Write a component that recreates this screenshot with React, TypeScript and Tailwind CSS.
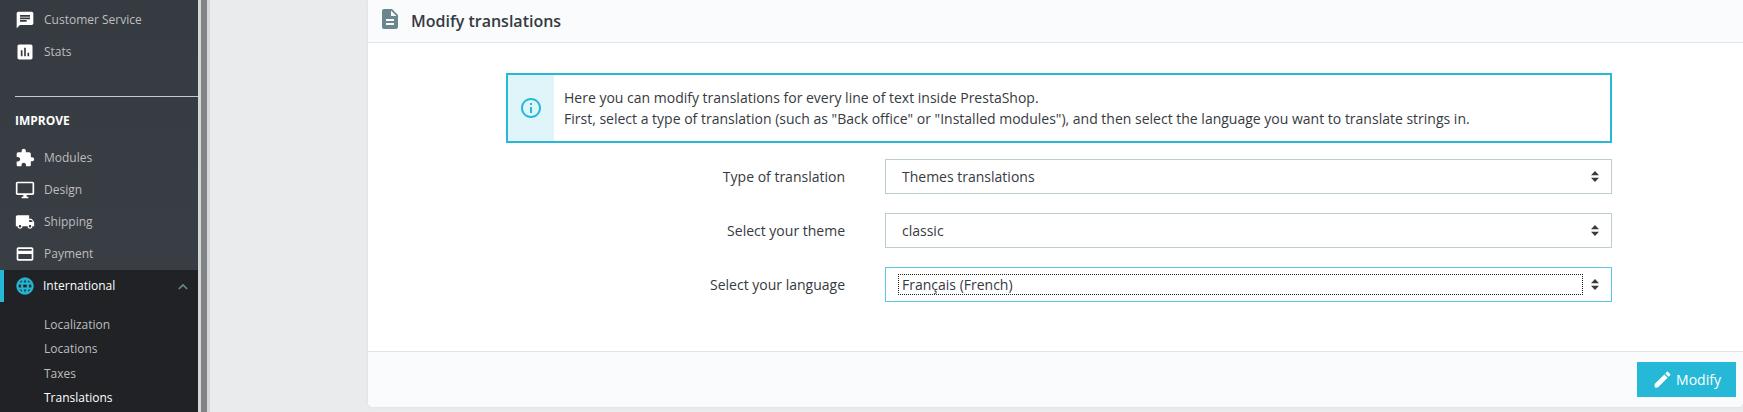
import React from "react";

const Mi = ({ d, className = "" }: { d: string; className?: string }) => (
  <svg viewBox="0 0 24 24" className={"shrink-0 " + className} fill="currentColor"><path d={d} /></svg>
);

const icons = {
  chat: "M20 2H4c-1.100 0-2 .9-2 2v18l4-4h14c1.100 0 2-.9 2-2V4c0-1.100-.9-2-2-2zM6 9h12v2H6V9zm8 5H6v-2h8v2zm4-6H6V6h12v2z",
  stats: "M19 3H5c-1.100 0-2 .9-2 2v14c0 1.100.9 2 2 2h14c1.100 0 2-.9 2-2V5c0-1.100-.9-2-2-2zM9 17H7v-7h2v7zm4 0h-2V7h2v10zm4 0h-2v-4h2v4z",
  puzzle: "M20.500 11H19V7c0-1.100-.9-2-2-2h-4V3.500C13 2.120 11.880 1 10.500 1S8 2.120 8 3.500V5H4c-1.100 0-1.990.9-1.990 2v3.800H3.500c1.490 0 2.700 1.210 2.700 2.700s-1.210 2.700-2.700 2.700H2V20c0 1.100.9 2 2 2h3.800v-1.500c0-1.490 1.210-2.700 2.700-2.700 1.490 0 2.700 1.210 2.700 2.700V22H17c1.100 0 2-.9 2-2v-4h1.500c1.380 0 2.500-1.120 2.500-2.500S21.880 11 20.500 11z",
  desktop: "M21 2H3c-1.100 0-2 .9-2 2v12c0 1.100.9 2 2 2h7v2H8v2h8v-2h-2v-2h7c1.100 0 2-.9 2-2V4c0-1.100-.9-2-2-2zm0 14H3V4h18v12z",
  truck: "M20 8h-3V4H3c-1.100 0-2 .9-2 2v11h2c0 1.660 1.340 3 3 3s3-1.340 3-3h6c0 1.660 1.340 3 3 3s3-1.340 3-3h2v-5l-3-4zM6 18.500c-.83 0-1.500-.67-1.500-1.500s.67-1.500 1.500-1.500 1.500.67 1.500 1.500-.67 1.500-1.500 1.500zm13.500-9l1.960 2.500H17V9.500h2.500zm-1.500 9c-.83 0-1.500-.67-1.500-1.500s.67-1.500 1.500-1.500 1.500.67 1.500 1.500-.67 1.500-1.500 1.500z",
  card: "M20 4H4c-1.110 0-1.990.89-1.990 2L2 18c0 1.110.89 2 2 2h16c1.110 0 2-.89 2-2V6c0-1.110-.89-2-2-2zm0 14H4v-6h16v6zm0-10H4V6h16v2z",
  globe: "M11.990 2C6.470 2 2 6.480 2 12s4.470 10 9.990 10C17.520 22 22 17.520 22 12S17.520 2 11.990 2zm6.930 6h-2.950c-.32-1.250-.78-2.450-1.380-3.560 1.840.63 3.370 1.910 4.330 3.560zM12 4.040c.83 1.200 1.480 2.530 1.910 3.960h-3.820c.43-1.430 1.080-2.760 1.910-3.960zM4.260 14C4.100 13.360 4 12.690 4 12s.1-1.360.26-2h3.380c-.08.66-.14 1.320-.14 2 0 .68.06 1.340.14 2H4.260zm.82 2h2.950c.32 1.250.78 2.450 1.380 3.560-1.840-.63-3.370-1.900-4.330-3.560zm2.950-8H5.080c.96-1.660 2.490-2.930 4.330-3.560C8.810 5.550 8.350 6.750 8.030 8zM12 19.960c-.83-1.200-1.480-2.530-1.910-3.960h3.820c-.43 1.430-1.080 2.760-1.910 3.960zM14.340 14H9.660c-.09-.66-.16-1.320-.16-2 0-.68.07-1.350.16-2h4.680c.09.65.16 1.320.16 2 0 .68-.07 1.340-.16 2zm.25 5.560c.6-1.110 1.060-2.310 1.380-3.560h2.950c-.96 1.650-2.490 2.930-4.330 3.560zM16.360 14c.08-.66.14-1.320.14-2 0-.68-.06-1.340-.14-2h3.380c.16.64.26 1.310.26 2s-.1 1.360-.26 2h-3.380z",
  doc: "M14 2H6c-1.100 0-1.990.9-1.990 2L4 20c0 1.100.89 2 1.990 2H18c1.100 0 2-.9 2-2V8l-6-6zm2 16H8v-2h8v2zm0-4H8v-2h8v2zm-3-5V3.500L18.500 9H13z",
  info: "M11 7h2v2h-2zm0 4h2v6h-2zm1-9C6.480 2 2 6.480 2 12s4.480 10 10 10 10-4.480 10-10S17.520 2 12 2zm0 18c-4.410 0-8-3.590-8-8s3.590-8 8-8 8 3.590 8 8-3.590 8-8 8z",
  edit: "M3 17.250V21h3.750L17.810 9.940l-3.750-3.750L3 17.250zM20.710 7.040c.39-.39.39-1.020 0-1.410l-2.340-2.340c-.39-.39-1.020-.39-1.410 0l-1.830 1.830 3.750 3.750 1.830-1.830z",
};

const NavItem = ({ icon, label }: { icon: string; label: string }) => (
  <div className="h-8 pl-[15px] flex items-center text-[#bebebe] text-xs">
    <Mi d={icon} className="text-white mr-[9px] w-[20px] h-[20px]" />
    <span>{label}</span>
  </div>
);

const Caret = () => (
  <svg viewBox="0 0 8 11" className="w-[8px] h-[11px] text-[#363a41]" fill="currentColor"><path d="M4 0 8 4.300H0zM0 6.700h8L4 11z" /></svg>
);

const Row = ({ label, value, focus }: { label: string; value: string; focus?: boolean }) => (
  <div className="flex items-center">
    <label className="w-[339px] text-right text-[14px] text-[#363a41]">{label}</label>
    <div className={"ml-[40px] flex-1 h-[35px] border flex items-center justify-between text-[14px] text-[#363a41] bg-white pl-[16px] pr-[12px] " + (focus ? "border-[#5bc6e0]" : "border-[#bbcdd2]")}>
      {focus ? (
        <span className="ml-[-4px] w-[685px] h-[21px] border border-dotted border-[#222] flex items-center pl-[3px] leading-none">{value}</span>
      ) : (
        <span>{value}</span>
      )}
      <Caret />
    </div>
  </div>
);

export default function App() {
  return (
    <div className="w-[1743px] h-[412px] flex overflow-hidden bg-[#eaebec] font-['Open_Sans',sans-serif]">
      <aside className="w-[198px] h-full shrink-0 flex flex-col bg-gradient-to-b from-[#363a41] to-[#3b3f46] pt-[4px]">
        <NavItem icon={icons.chat} label="Customer Service" />
        <NavItem icon={icons.stats} label="Stats" />
        <div className="mt-[28px] ml-[15px] h-px bg-[#bbcdd2]" />
        <div className="mt-[16px] pl-[15px] h-[16px] flex items-center text-xs font-bold text-white">IMPROVE</div>
        <div className="mt-[13px]">
          <NavItem icon={icons.puzzle} label="Modules" />
          <NavItem icon={icons.desktop} label="Design" />
          <NavItem icon={icons.truck} label="Shipping" />
          <NavItem icon={icons.card} label="Payment" />
        </div>
        <div className="flex-1 bg-[#202226]">
          <div className="h-8 border-l-4 border-[#25b9d7] pl-[11px] pr-[10px] flex items-center text-xs text-white">
            <Mi d={icons.globe} className="text-[#25b9d7] stroke-current stroke-[0.7] mr-[8px] w-[20px] h-[20px]" />
            <span className="flex-1">International</span>
            <svg viewBox="0 0 12 8" className="w-[10px] h-[7px] text-[#6c868e]" fill="none" stroke="currentColor" strokeWidth="2"><path d="M1 7l5-5 5 5" /></svg>
          </div>
          <ul className="pl-[44px] pt-[11px] text-xs text-[#bebebe]">
            <li className="h-[24.300px] flex items-center">Localization</li>
            <li className="h-[24.300px] flex items-center">Locations</li>
            <li className="h-[24.300px] flex items-center">Taxes</li>
            <li className="h-[24.300px] flex items-center text-white">Translations</li>
          </ul>
        </div>
      </aside>
      <div className="w-[12px] h-full shrink-0 flex">
        <div className="w-[3px] bg-[#d6d6d6]" />
        <div className="w-[6px] bg-[#808484]" />
        <div className="w-[3px] bg-[#d6d8d8]" />
      </div>
      <main className="flex-1 pl-[158px] pb-[5px]">
        <section className="h-full bg-white rounded-b-[5px] shadow-[0_0_4px_0_rgba(0,0,0,0.06)] flex flex-col">
          <header className="h-[43px] shrink-0 bg-[#fafbfc] border-b border-[#dbe6e9] flex items-center pl-[10px] text-[#363a41] text-[16px] font-semibold">
            <Mi d={icons.doc} className="text-[#6c868e] w-[24px] h-[24px] mr-[9px] mt-[-4px]" />
            <span>Modify translations</span>
          </header>
          <div className="flex-1 pl-[138px] pr-[131px] pt-[30px] flex flex-col">
            <div className="h-[70px] border-2 border-[#25b9d7] flex">
              <div className="w-[46px] bg-[#dff5f9] flex items-center justify-center">
                <Mi d={icons.info} className="text-[#25b9d7] w-[24px] h-[24px]" />
              </div>
              <div className="pl-[10px] flex flex-col justify-center text-[14px] leading-[21px] text-[#363a41]">
                <p>Here you can modify translations for every line of text inside PrestaShop.</p>
                <p>First, select a type of translation (such as "Back office" or "Installed modules"), and then select the language you want to translate strings in.</p>
              </div>
            </div>
            <div className="mt-[16px] flex flex-col gap-[19px]">
              <Row label="Type of translation" value="Themes translations" />
              <Row label="Select your theme" value="classic" />
              <Row label="Select your language" value="Français (French)" focus />
            </div>
          </div>
          <footer className="h-[56px] shrink-0 bg-[#fafbfc] border-t border-[#dbe6e9] rounded-b-[5px] flex items-start justify-end pt-[10px] pr-[7px]">
            <button className="w-[99px] h-[35px] bg-[#25b9d7] text-white text-[14px] flex items-center justify-center gap-[3px]">
              <Mi d={icons.edit} className="w-[21px] h-[21px]" />
              Modify
            </button>
          </footer>
        </section>
      </main>
    </div>
  );
}
